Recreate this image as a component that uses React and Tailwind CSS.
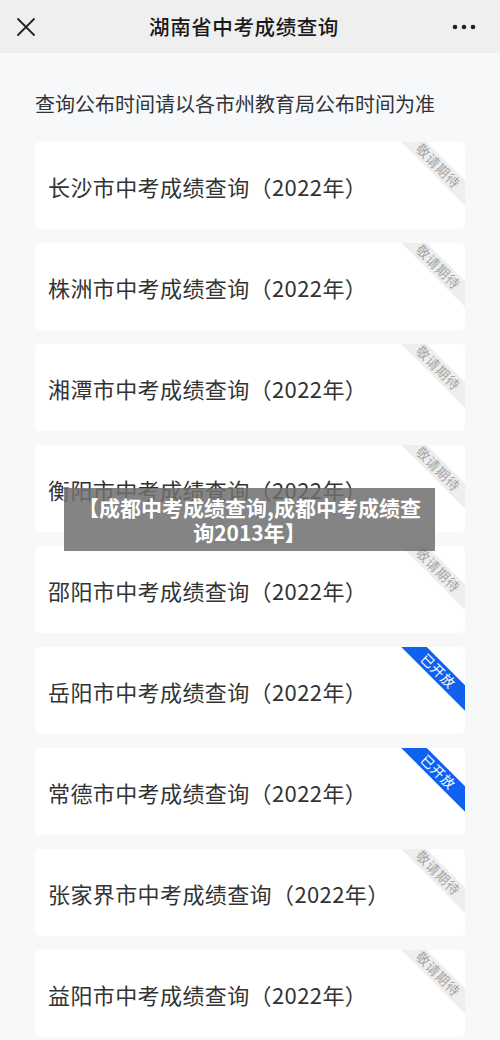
import React from "react";

const items = [
  { name: "长沙市中考成绩查询（2022年）", open: false },
  { name: "株洲市中考成绩查询（2022年）", open: false },
  { name: "湘潭市中考成绩查询（2022年）", open: false },
  { name: "衡阳市中考成绩查询（2022年）", open: false },
  { name: "邵阳市中考成绩查询（2022年）", open: false },
  { name: "岳阳市中考成绩查询（2022年）", open: true },
  { name: "常德市中考成绩查询（2022年）", open: true },
  { name: "张家界市中考成绩查询（2022年）", open: false },
  { name: "益阳市中考成绩查询（2022年）", open: false },
];

function Card({ name, open }) {
  return (
    <div className="relative h-[87px] w-[430px] overflow-hidden rounded-[5px] bg-white flex items-center pl-[13px]">
      <span className="text-[22px] leading-none text-[#333333] tracking-[0.4px]">{name}</span>
      <div
        className={
          "absolute right-[-25px] top-[15px] h-[18px] w-[104px] rotate-45 flex items-center justify-center text-[13.5px] leading-none tracking-[0.5px] " +
          (open ? "bg-[#0f62f0] text-white" : "bg-[#eeeeee] text-[#a6a6a6]")
        }
      >
        {open ? "已开放" : "敬请期待"}
      </div>
    </div>
  );
}

export default function App() {
  return (
    <div
      className="relative w-[500px] h-[1040px] overflow-hidden bg-[#f7f8fa]"
      style={{ fontFamily: '"Noto Sans CJK SC", "Noto Sans", sans-serif' }}
    >
      <div className="h-[53px] bg-[#efefef] flex items-center justify-between px-[15px]">
        <svg width="20" height="20" viewBox="0 0 20 20" className="ml-[1px]">
          <path d="M2 2 L18 18 M18 2 L2 18" stroke="#222" strokeWidth="1.8" strokeLinecap="round" />
        </svg>
        <div className="text-[20.5px] font-medium text-[#1a1a1a] tracking-[0.6px]">湖南省中考成绩查询</div>
        <svg width="24" height="6" viewBox="0 0 24 6" className="mr-[9px]">
          <circle cx="3" cy="3" r="2.3" fill="#222" />
          <circle cx="12" cy="3" r="2.3" fill="#222" />
          <circle cx="21" cy="3" r="2.3" fill="#222" />
        </svg>
      </div>
      <div className="px-[35px] pt-[38px] text-[20px] leading-[26px] text-[#333333]">
        查询公布时间请以各市州教育局公布时间为准
      </div>
      <div className="mt-[25px] flex flex-col gap-[14px] items-center">
        {items.map((it) => (
          <Card key={it.name} {...it} />
        ))}
      </div>
      <div className="absolute left-[64px] top-[488px] w-[371px] h-[63px] bg-[#6e6e6e]/85 flex items-center justify-center text-center text-white font-bold text-[21px] leading-[25px]">
        <div>
          【成都中考成绩查询,成都中考成绩查
          <br />
          询2013年】
        </div>
      </div>
    </div>
  );
}
